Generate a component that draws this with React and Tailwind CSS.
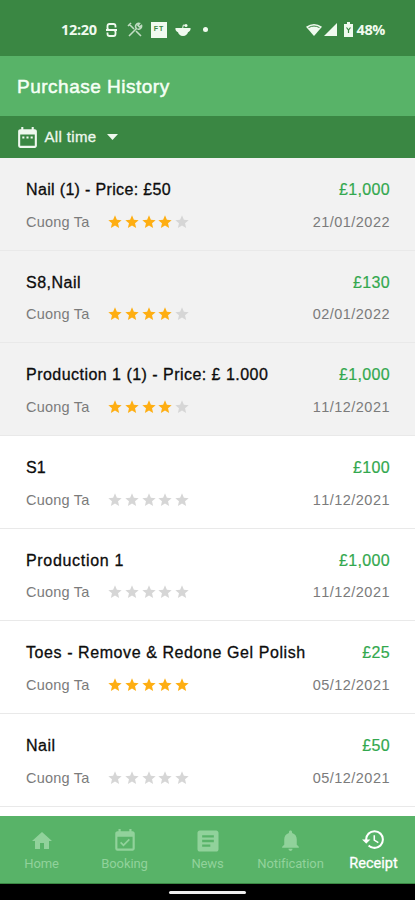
import React from "react";
import { MdHome, MdEventAvailable, MdArticle, MdNotifications, MdHistory, MdDateRange, MdStar } from "react-icons/md";

const purchases = [
  { title: "Nail (1) - Price: £50", amount: "£1,000", date: "21/01/2022", stars: 4, shaded: true, tracking: "tracking-[0.34px]" },
  { title: "S8,Nail", amount: "£130", date: "02/01/2022", stars: 4, shaded: true, tracking: "tracking-[0.5px]" },
  { title: "Production 1 (1) - Price: £ 1.000", amount: "£1,000", date: "11/12/2021", stars: 4, shaded: true, tracking: "tracking-[0.47px]" },
  { title: "S1", amount: "£100", date: "11/12/2021", stars: 0, tracking: "tracking-[0.2px]" },
  { title: "Production 1", amount: "£1,000", date: "11/12/2021", stars: 0, tracking: "tracking-[0.68px]" },
  { title: "Toes - Remove & Redone Gel Polish", amount: "£25", date: "05/12/2021", stars: 5, tracking: "tracking-[0.58px]" },
  { title: "Nail", amount: "£50", date: "05/12/2021", stars: 0, tracking: "tracking-[0.5px]" },
];

function StatusBar() {
  return (
    <div className="flex h-14 shrink-0 items-center bg-[#3a8743] pt-[3px] pr-[30px] pl-[61px] font-['Open_Sans',sans-serif] text-[14.5px] font-bold text-[#f0faef]">
      <span className="w-[45px] tracking-[-0.3px]">12:20</span>
      <svg className="h-4 w-[11px]" viewBox="0 0 11 16" fill="none" stroke="currentColor" strokeWidth="1.8">
        <path d="M9.5 5.5V4Q9.5 2 7.5 2h-4Q1.5 2 1.5 4v2q0 2 2 2h4q2 0 2 2v2q0 2-2 2h-4q-2 0-2-2v-1.5M0 8h11" />
      </svg>
      <svg className="ml-[10px] h-4 w-4 opacity-75" viewBox="0 0 16 16" fill="none" stroke="currentColor" strokeWidth="1.6">
        <path d="M2 2l5 5M9 9l5 5M2 14l8-8M1 4l3-3M9.5 6.5a3 3 0 0 1 3-5L11 3.5l1.5 1.5 2-1.5a3 3 0 0 1-4 3.5" />
      </svg>
      <span className="ml-2 flex h-4 w-4 justify-center bg-[#f0faef] pt-[3px] font-['Liberation_Sans',sans-serif] text-[7px] leading-[8px] font-bold tracking-[1px] text-[#3a8743]">FT</span>
      <svg className="ml-2 h-4 w-4" viewBox="0 0 16 16" fill="currentColor">
        <path d="M.5 6h15c.5 1.500-.7 3.500-2.500 4.300-.7 2-2 3.700-5 3.700s-4.300-1.700-5-3.700C1.200 9.500 0 7.500 .5 6z" />
        <circle cx="11" cy="3.500" r="1.500" />
        <path d="M7.500 7l.8-4 2.700.5" fill="none" stroke="currentColor" />
      </svg>
      <span className="ml-[12px] h-[5px] w-[5px] rounded-full bg-current" />
      <span className="flex-1" />
      <svg className="h-[14px] w-4" viewBox="0 0 16 14" fill="currentColor">
        <path d="M0 3.800Q8-2 16 3.800L8 13z" />
        <path d="M2.500 4.600Q8 1.500 13.500 4.600" fill="none" stroke="#3a8743" strokeWidth="1" />
      </svg>
      <svg className="ml-[2px] h-[14px] w-[13px]" viewBox="0 0 13 14" fill="currentColor"><path d="M13 0v13H0z" /></svg>
      <svg className="mr-1 ml-[7px] h-[15px] w-[9px]" viewBox="0 0 9 15" fill="currentColor">
        <path d="M3 0h3v2h3v13H0V2h3z" />
        <path d="M2.500 5.500L4.500 8l2-2.500M4.500 8v3" fill="none" stroke="#3a8743" strokeWidth="1.200" />
      </svg>
      <span className="tracking-[-0.4px]">48%</span>
    </div>
  );
}

function Rating({ value }) {
  return (
    <span className="ml-[17px] flex gap-[0.8px]">
      {[1, 2, 3, 4, 5].map((n) => (
        <MdStar key={n} className={n <= value ? "h-4 w-4 text-[#feae12]" : "h-4 w-4 text-[#d6d6d6]"} />
      ))}
    </span>
  );
}

function Purchase({ item }) {
  return (
    <li className={`${item.shaded ? "bg-[#f2f2f2]" : "bg-white"} h-[92.7px] shrink-0 border-b border-[#e9e9e9] pr-[25px] pl-[26px] pt-[20px]`}>
      <div className="flex justify-between text-base leading-6">
        <span className={`${item.tracking} text-[#0c0c0c] [-webkit-text-stroke:0.3px]`}>{item.title}</span>
        <span className="tracking-[0.35px] text-[#32a84e] [-webkit-text-stroke:0.2px]">{item.amount}</span>
      </div>
      <div className="mt-[8.5px] flex items-center text-[14.5px] leading-[22px] text-[#7b7b7b]">
        <span className="w-[64px] whitespace-nowrap tracking-[0.2px]">Cuong Ta</span>
        <Rating value={item.stars} />
        <span className="ml-auto tracking-[0.48px] [font-kerning:none]">{item.date}</span>
      </div>
    </li>
  );
}

function Tab({ label, icon, active }) {
  return (
    <div className={`${active ? "text-white [-webkit-text-stroke:0.3px]" : "text-[#91d29b]"} flex flex-1 flex-col items-center pt-[11px]`}>
      <div className="flex h-[27px] items-center">{icon}</div>
      <span className={`${active ? "text-[14.5px]" : "text-[13px] tracking-[-0.1px]"} leading-5`}>{label}</span>
    </div>
  );
}

export default function App() {
  return (
    <div className="flex h-[900px] w-[415px] flex-col overflow-hidden bg-white font-['Liberation_Sans',sans-serif]">
      <StatusBar />
      <header className="flex h-[60px] shrink-0 items-center bg-[#58b368] pt-[2px] pl-[17px] text-[19px] tracking-[0.5px] text-[#f5fff5] [-webkit-text-stroke:0.5px]">
        Purchase History
      </header>
      <div className="flex h-[42px] shrink-0 items-center bg-[#3a8743] pl-[15px] text-[15px] text-[#eef8ee]">
        <MdDateRange className="h-[25px] w-[25px]" />
        <span className="ml-[4.5px] tracking-[0.35px] [-webkit-text-stroke:0.3px]">All time</span>
        <svg className="ml-[11px] h-[6px] w-[11px]" viewBox="0 0 11 6" fill="currentColor"><path d="M0 0h11L5.500 6z" /></svg>
      </div>
      <ul className="flex min-h-0 flex-1 flex-col overflow-hidden">
        {purchases.map((item, i) => <Purchase key={i} item={item} />)}
      </ul>
      <nav className="flex h-[68px] shrink-0 border-b border-[#3a8743] bg-[#58b368] font-[Roboto,sans-serif]">
        <Tab label="Home" icon={<MdHome className="h-6 w-6" />} />
        <Tab label="Booking" icon={<MdEventAvailable className="h-[26px] w-[26px]" />} />
        <Tab label="News" icon={<MdArticle className="h-7 w-7" />} />
        <Tab label="Notification" icon={<MdNotifications className="h-[25px] w-[25px]" />} />
        <Tab label="Receipt" icon={<MdHistory className="h-[25px] w-[25px] -translate-y-px" />} active />
      </nav>
      <div className="flex h-4 shrink-0 justify-center bg-black pt-[7px]">
        <div className="h-[3px] w-[77px] rounded-full bg-[#eeeeee]" />
      </div>
    </div>
  );
}
